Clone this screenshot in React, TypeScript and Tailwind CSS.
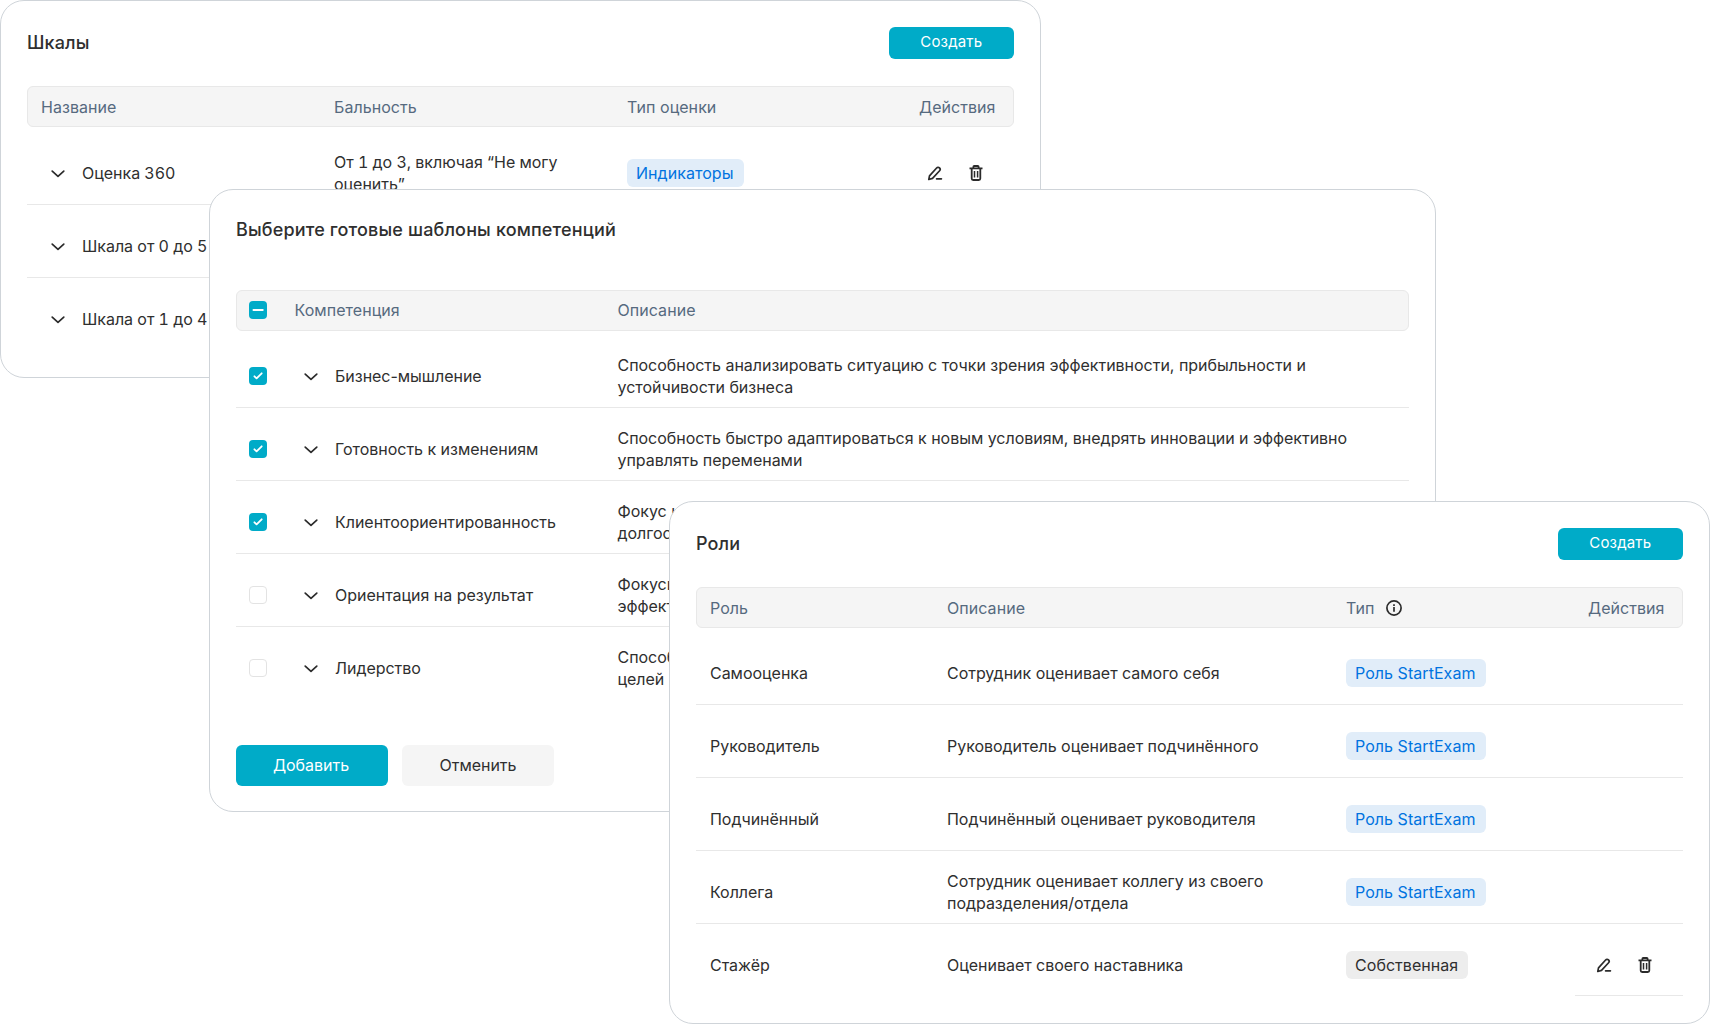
import type { ReactNode } from "react"
import clsx from "clsx"

const scales = [
  { name: "Оценка 360", points: "От 1 до 3, включая “Не могу оценить”", type: "Индикаторы" },
  { name: "Шкала от 0 до 5" },
  { name: "Шкала от 1 до 4" },
]

const competencies = [
  {
    name: "Бизнес-мышление",
    description: ["Способность анализировать ситуацию с точки зрения эффективности, прибыльности и", "устойчивости бизнеса"],
    checked: true,
  },
  {
    name: "Готовность к изменениям",
    description: ["Способность быстро адаптироваться к новым условиям, внедрять инновации и эффективно", "управлять переменами"],
    checked: true,
  },
  { name: "Клиентоориентированность", description: ["Фокус на", "долгоср"], checked: true },
  { name: "Ориентация на результат", description: ["Фокусир", "эффекти"], checked: false },
  { name: "Лидерство", description: ["Способн", "целей"], checked: false },
]

const roles = [
  { name: "Самооценка", description: ["Сотрудник оценивает самого себя"], own: false },
  { name: "Руководитель", description: ["Руководитель оценивает подчинённого"], own: false },
  { name: "Подчинённый", description: ["Подчинённый оценивает руководителя"], own: false },
  { name: "Коллега", description: ["Сотрудник оценивает коллегу из своего", "подразделения/отдела"], own: false },
  { name: "Стажёр", description: ["Оценивает своего наставника"], own: true },
]

function Card({ className, children }: { className: string; children: ReactNode }) {
  return (
    <section className={clsx("absolute rounded-[24px] border border-[#cfd4d9] bg-white px-[26px]", className)}>
      {children}
    </section>
  )
}

function CardTitle({ children }: { children: ReactNode }) {
  return <h2 className="text-[18px] font-medium tracking-[0.15px]">{children}</h2>
}

function TableHead({ className, children }: { className?: string; children: ReactNode }) {
  return (
    <div
      className={clsx(
        "flex h-[41px] items-center rounded-md border border-[#e8e8e8] bg-[#f5f5f5] tracking-[0.05px] text-[#566a7f]",
        className,
      )}
    >
      {children}
    </div>
  )
}

function Row({ className, last, children }: { className?: string; last?: boolean; children: ReactNode }) {
  return (
    <div
      className={clsx(
        "flex h-[72.9px] items-center border-b pt-2.5",
        last ? "border-transparent" : "border-[#e8e8e8]",
        className,
      )}
    >
      {children}
    </div>
  )
}

function CreateButton() {
  return (
    <button className="flex h-8 w-[125.5px] items-center justify-center rounded-md bg-[#00abc8] pb-[1.5px] text-[15px] tracking-[0.01em] text-white">
      Создать
    </button>
  )
}

function Tag({ own, children }: { own?: boolean; children: ReactNode }) {
  return (
    <span
      className={clsx(
        "flex h-7 items-center rounded-md pl-[9px] pr-2.5 tracking-[0.05px]",
        own ? "bg-[#ededed]" : "bg-[#e1edf9] text-[#0073e0]",
      )}
    >
      {children}
    </span>
  )
}

function Chevron() {
  return (
    <svg className="h-[18px] w-[18px] shrink-0" viewBox="0 0 18 18" fill="none" stroke="#2b2b2b" strokeWidth="1.7" strokeLinecap="round" strokeLinejoin="round">
      <path d="M3.2 7.1 9 12.4l5.8-5.3" />
    </svg>
  )
}

function Checkbox({ state }: { state: "on" | "off" | "mixed" }) {
  return (
    <span
      className={clsx(
        "flex h-[18px] w-[18px] shrink-0 items-center justify-center rounded",
        state === "off" ? "border border-[#e3e3e3] bg-white" : "bg-[#00abc8]",
      )}
    >
      {state !== "off" && (
        <svg className="h-[18px] w-[18px]" viewBox="0 0 18 18" fill="none" stroke="white" strokeWidth="1.8" strokeLinecap="round" strokeLinejoin="round">
          <path d={state === "on" ? "M5.4 9.3 7.6 11.4 12.7 6.3" : "M4.4 9h9.4"} />
        </svg>
      )}
    </span>
  )
}

function RowActions() {
  return (
    <div className="flex items-center gap-[23px]">
      <svg className="h-[18px] w-[18px]" viewBox="0 0 18 18" fill="none" stroke="#2b2b2b" strokeWidth="1.7" strokeLinecap="round" strokeLinejoin="round">
        <path d="M2.8 15.5 3.5 11.9 10.6 4a2 2 0 0 1 2.9-.1 2 2 0 0 1 .1 2.8L6.5 14.4Z" />
        <path d="M10.6 14.8h4.8" />
      </svg>
      <svg className="h-[18px] w-[18px]" viewBox="0 0 18 18" fill="none" stroke="#2b2b2b" strokeWidth="1.8" strokeLinejoin="round">
        <path d="M2.5 4.4h13M6.4 4.2V2.8q0-.8.8-.8h3.6q.8 0 .8.8v1.4" />
        <path d="M4.7 4.4v10.1q0 1.5 1.5 1.5h5.6q1.5 0 1.5-1.5V4.4" />
        <path d="M7.5 7v6.4M10.6 7v6.4" strokeWidth="1.5" />
      </svg>
    </div>
  )
}

function Lines({ lines }: { lines: string[] }) {
  return (
    <div className="whitespace-nowrap">
      {lines.map((line) => (
        <p key={line}>{line}</p>
      ))}
    </div>
  )
}

export default function App() {
  return (
    <main className="relative h-[1024px] w-[1710px] overflow-hidden bg-white font-['Inter',sans-serif] text-[16px] leading-[22px] tracking-[-0.025px] text-[#2f2f2f]">
      <Card className="left-0 top-0 h-[378px] w-[1041px]">
        <div className="flex items-center justify-between pt-[26px]">
          <CardTitle>Шкалы</CardTitle>
          <CreateButton />
        </div>
        <TableHead className="mt-[27px] pl-[13px]">
          <div className="w-[293px]">Название</div>
          <div className="w-[293px]">Бальность</div>
          <div className="w-[292px]">Тип оценки</div>
          <div>Действия</div>
        </TableHead>
        <div className="mt-[5px]">
          {scales.map((scale, i) => (
            <Row key={scale.name} last={i === scales.length - 1} className="pl-[22px] tabular-nums">
              <Chevron />
              <div className="w-[267px] shrink-0 pl-[15px]">{scale.name}</div>
              <div className="w-[293px] shrink-0 pr-14">{scale.points}</div>
              {scale.type && (
                <>
                  <div className="flex w-[299px] shrink-0">
                    <Tag>{scale.type}</Tag>
                  </div>
                  <RowActions />
                </>
              )}
            </Row>
          ))}
        </div>
      </Card>

      <Card className="left-[209px] top-[189px] h-[623px] w-[1227px]">
        <div className="pt-[29px]">
          <CardTitle>Выберите готовые шаблоны компетенций</CardTitle>
        </div>
        <TableHead className="mt-[49px] pb-px pl-3">
          <Checkbox state="mixed" />
          <div className="w-[350.5px] pl-[27.5px]">Компетенция</div>
          <div>Описание</div>
        </TableHead>
        <div className="mt-1">
          {competencies.map((item, i) => (
            <Row key={item.name} last={i === competencies.length - 1} className="pl-[13px]">
              <Checkbox state={item.checked ? "on" : "off"} />
              <div className="flex w-[350.5px] shrink-0 items-center gap-[15px] pl-[35px]">
                <Chevron />
                {item.name}
              </div>
              <Lines lines={item.description} />
            </Row>
          ))}
        </div>
        <div className="mt-[45.5px] flex gap-3.5">
          <button className="h-[41px] w-[152px] rounded-md bg-[#00abc8] pr-0.5 text-white">Добавить</button>
          <button className="h-[41px] w-[152px] rounded-md bg-[#f5f5f5]">Отменить</button>
        </div>
      </Card>

      <Card className="left-[669px] top-[501px] h-[523px] w-[1041px]">
        <div className="flex items-center justify-between pt-[26px]">
          <CardTitle>Роли</CardTitle>
          <CreateButton />
        </div>
        <TableHead className="mt-[27px] pl-[13px]">
          <div className="w-[237px]">Роль</div>
          <div className="w-[399px]">Описание</div>
          <div className="flex w-[242px] items-center gap-3">
            Тип
            <svg className="h-4 w-4" viewBox="0 0 16 16" fill="none" stroke="#2b2b2b" strokeWidth="1.7">
              <circle cx="8" cy="8" r="7.1" />
              <path d="M8 7.1v4.6M8 4.2v1.7" />
            </svg>
          </div>
          <div>Действия</div>
        </TableHead>
        <div className="mt-1">
          {roles.map((role, i) => (
            <Row key={role.name} last={i === roles.length - 1} className="pl-3.5">
              <div className="w-[237px]">{role.name}</div>
              <div className="w-[399px]">
                <Lines lines={role.description} />
              </div>
              <div className="flex w-[249px]">
                <Tag own={role.own}>{role.own ? "Собственная" : "Роль StartExam"}</Tag>
              </div>
              {role.own && <RowActions />}
            </Row>
          ))}
          <div className="-mt-px ml-auto h-px w-[108px] bg-[#e8e8e8]" />
        </div>
      </Card>
    </main>
  )
}
